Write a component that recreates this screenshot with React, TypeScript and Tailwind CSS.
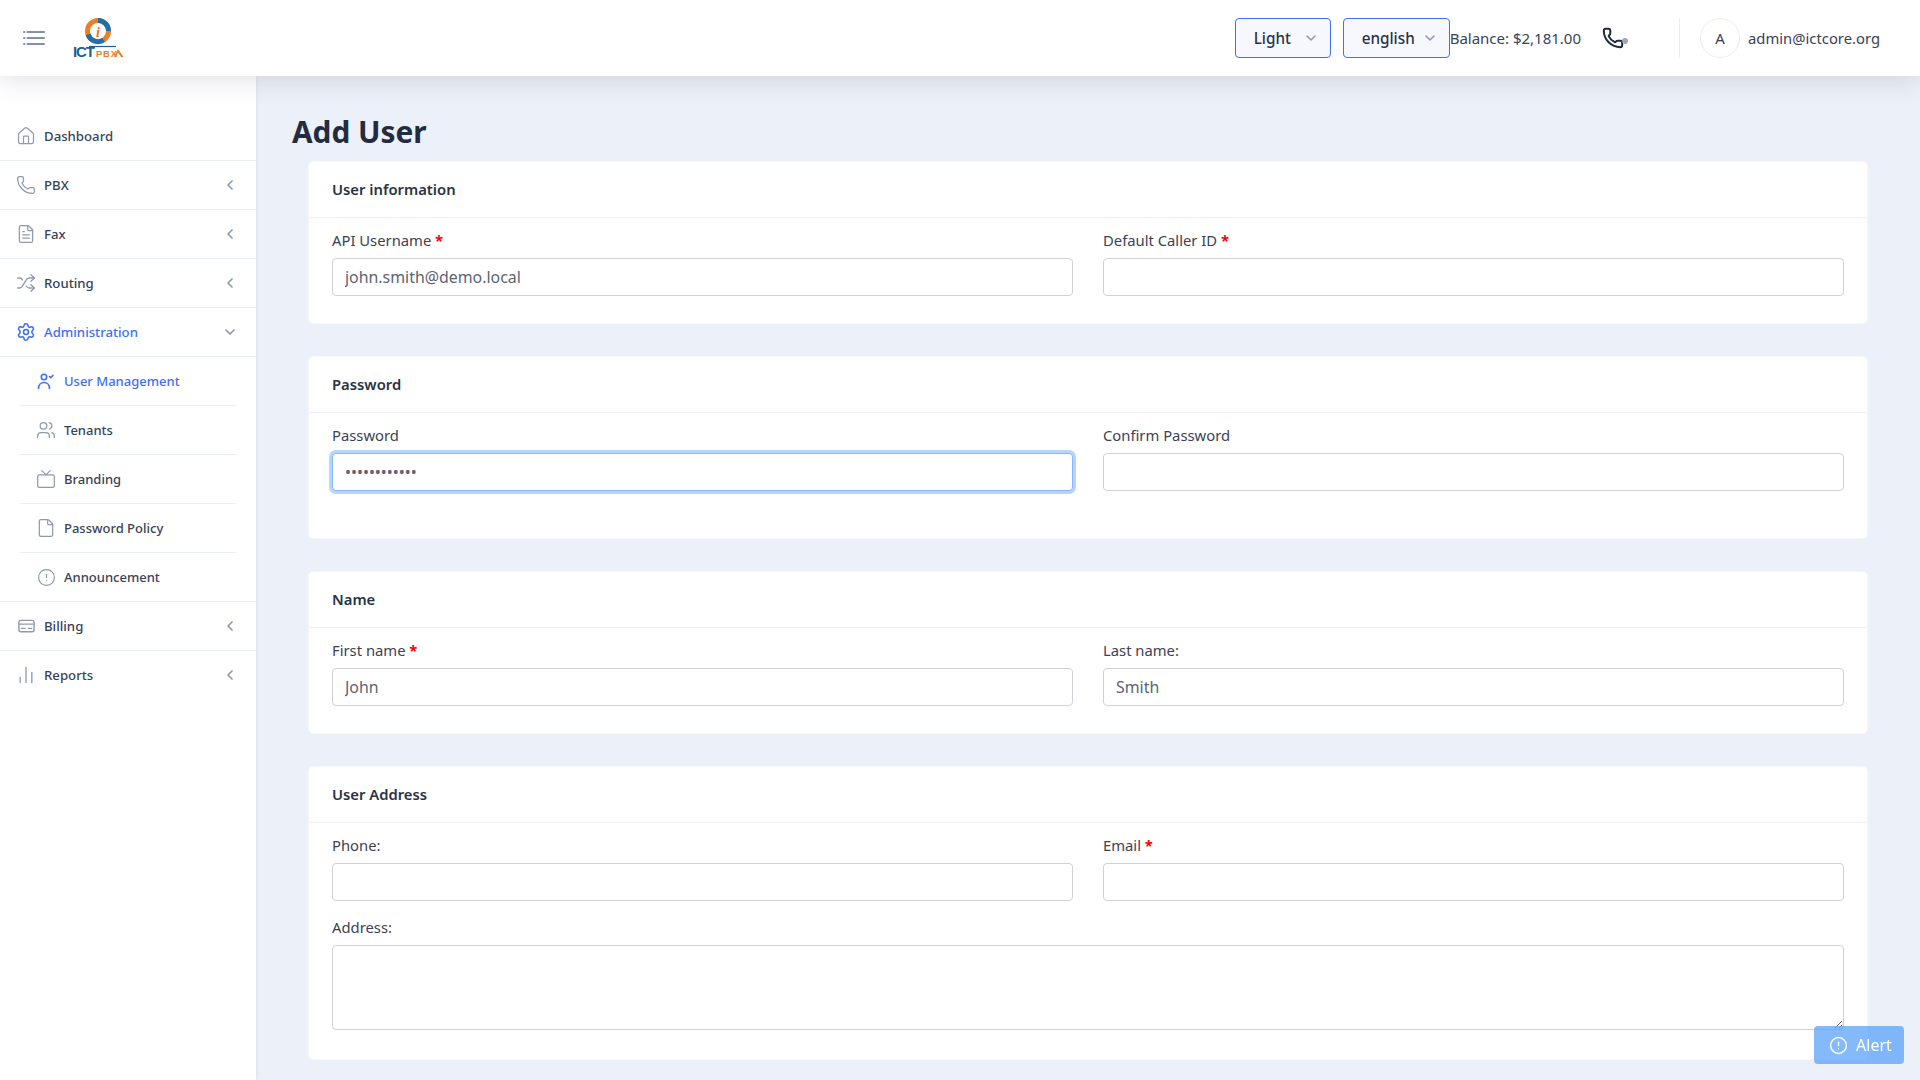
import React from "react";
import {
  House, Phone, FileText, Shuffle, Settings, Users, Tv, File, CircleAlert, ChevronLeft, ChevronDown, ChartNoAxesColumn,
} from "lucide-react";

function Logo() {
  return (
    <svg width="52" height="42" viewBox="0 0 52 42" className="shrink-0">
      <circle cx="26" cy="14" r="10.500" fill="none" stroke="#ef7d22" strokeWidth="5" />
      <path d="M26 3.500a10.500 10.500 0 0 1 10.500 10.500" fill="none" stroke="#1f6fa8" strokeWidth="5" />
      <path d="M16 17.500a10.500 10.500 0 0 0 15.500 5.500" fill="none" stroke="#1f6fa8" strokeWidth="5" />
      <circle cx="26" cy="14" r="7.500" fill="#fff" />
      <text x="26" y="19.500" textAnchor="middle" fontSize="14" fontWeight="700" fontStyle="italic" fill="#e8702a" fontFamily="'Liberation Serif', serif">i</text>
      <text x="1" y="40" fontSize="15" fontWeight="700" fill="#1e5f96" fontFamily="'Liberation Sans', sans-serif" textLength="22" lengthAdjust="spacing">ICT</text>
      <text x="24" y="40" fontSize="9.500" fontWeight="700" fill="#ef7d22" fontFamily="'Liberation Sans', sans-serif" textLength="21">PBX</text>
      <path d="M17 29.500h27" stroke="#1e5f96" strokeWidth="1.200" />
      <path d="M42 40l4-8 5.500 8h-2.500l-3-4.500-2 4.500z" fill="#ef7d22" />
    </svg>
  );
}

function UserCheckIcon({ className }: { className?: string }) {
  return (
    <svg viewBox="0 0 18 18" className={className} fill="none" stroke="currentColor" strokeWidth="1.600" strokeLinecap="round" strokeLinejoin="round">
      <circle cx="7" cy="5" r="2.700" />
      <path d="M1.500 16.500c0-3.800 2.500-6 5.500-6s5.500 2.200 5.500 6" />
      <path d="M12.500 4.500l1.200 1.200 2.300-2.400" />
    </svg>
  );
}

function BillingIcon({ className }: { className?: string }) {
  return (
    <svg viewBox="0 0 18 14" className={className} fill="none" stroke="currentColor" strokeWidth="1.500" strokeLinecap="round">
      <rect x="1" y="1" width="16" height="12" rx="2" />
      <path d="M1 5h16" />
      <path d="M3.500 9.500h4M11 9.500h3.500" />
    </svg>
  );
}

function NavRow({ icon, label, active, chevron, sub, last }: { icon: React.ReactNode; label: string; active?: boolean; chevron?: "left" | "down"; sub?: boolean; last?: boolean }) {
  return (
    <div className={`${sub ? "mx-5" : ""} ${last ? "" : "border-b border-[#e9edf6]"}`}>
      <div className={`h-12 flex items-center pl-[18px] pr-[18px] gap-[10px] ${sub ? "text-[13px]" : "text-[13.2px]"} font-medium ${active ? "text-[#3e6ff5]" : "text-[#3a4256]"}`}>
        <span className={`w-[16px] h-[16px] flex items-center justify-center shrink-0 [&>svg]:shrink-0 ${active ? "text-[#3e6ff5]" : "text-[#8f99b3]"}`}>{icon}</span>
        <span className="flex-1 pt-[1px]">{label}</span>
        {chevron === "left" && <ChevronLeft size={16} strokeWidth={2.600} className="text-[#8f99b3] shrink-0" />}
        {chevron === "down" && <ChevronDown size={16} strokeWidth={2.600} className="text-[#8f99b3] shrink-0" />}
      </div>
    </div>
  );
}

const inputClass = "block w-full h-[38px] rounded-[4px] border border-[#ced1da] bg-white px-3 text-[15.900px] text-[#5c6373] outline-none";

function Field({ label, required, value, type, focus }: { label: string; required?: boolean; value?: string; type?: string; focus?: boolean }) {
  return (
    <div className="flex-1 min-w-0">
      <div className="h-[25px] leading-[14px] text-[14.800px] text-[#3c4254]">
        {label}
        {required && <span className="text-[#ff0000] font-bold"> *</span>}
      </div>
      <input
        readOnly
        type={type || "text"}
        value={value || ""}
        className={focus ? "block w-full h-[38px] rounded-[4px] border border-[#86b7fe] ring-[3px] ring-[#b6d4fe] bg-white px-3 text-[15.900px] text-[#5c6373] outline-none" : inputClass}
      />
    </div>
  );
}

function Card({ title, children, pb }: { title: string; children: React.ReactNode; pb: string }) {
  return (
    <section className="bg-white rounded-[5px] border border-[#f6f8fc] mb-[32px]">
      <div className="h-[56px] flex items-center px-[23px] border-b border-[#eceff6] text-[14.800px] font-semibold text-[#2b3245]">{title}</div>
      <div className={`px-[23px] pt-[15px] ${pb}`}>{children}</div>
    </section>
  );
}

export default function App() {
  return (
    <div className="h-screen overflow-hidden flex flex-col bg-[#ecf0f8] font-['Noto_Sans','Open_Sans',sans-serif]">
      <header className="h-[76px] shrink-0 bg-white flex items-center pl-[23px] pr-[40px] relative z-20 shadow-[0_4px_24px_rgba(60,70,100,0.16)]">
        <svg width="22" height="14" viewBox="0 0 22 14" fill="none" stroke="#8290ad" strokeWidth="2" strokeLinecap="round" className="shrink-0">
          <path d="M1 1h0.500M4.500 1H21M1 7h0.500M4.500 7H21M1 13h0.500M4.500 13H21" />
        </svg>
        <div className="ml-[27px] mt-[-1px]"><Logo /></div>
        <div className="flex-1" />
        <div className="flex items-center h-10">
          <button className="h-10 w-[96px] rounded-[4px] border border-[#3e6ff5] bg-[#f7f8fd] flex items-center pl-[18px] pr-[11px] text-[15.300px] font-medium text-[#2b3245]">
            <span className="flex-1 text-left">Light</span>
            <ChevronDown size={16} strokeWidth={2.400} className="text-[#8f99b3] shrink-0" />
          </button>
          <button className="ml-3 h-10 w-[107px] rounded-[4px] border border-[#3e6ff5] bg-[#f7f8fd] flex items-center pl-[18px] pr-[11px] text-[15.300px] font-medium text-[#2b3245]">
            <span className="flex-1 text-left">english</span>
            <ChevronDown size={16} strokeWidth={2.400} className="text-[#8f99b3] shrink-0" />
          </button>
          <span className="text-[15px] text-[#3a4256] whitespace-nowrap">Balance: $2,181.00</span>
          <div className="ml-[21px] relative w-[26px] h-6 flex items-center">
            <Phone size={22} strokeWidth={2.200} className="text-[#1f2a44] shrink-0" />
            <span className="absolute right-0 top-[12px] w-[6px] h-[6px] rounded-full bg-[#9aa4bb]" />
          </div>
          <div className="ml-[51px] w-px h-10 bg-[#e9edf6]" />
          <div className="ml-5 w-10 h-10 rounded-full border border-[#e9edf6] flex items-center justify-center text-[15px] text-[#3a4256]">A</div>
          <span className="ml-2 text-[14.800px] text-[#3a4256] whitespace-nowrap">admin@ictcore.org</span>
        </div>
      </header>

      <div className="flex-1 min-h-0 flex">
        <aside className="w-[256px] shrink-0 bg-white pt-[36px] shadow-[1px_0_3px_rgba(60,70,100,0.08)] relative z-10">
          <NavRow icon={<House size={20} strokeWidth={1.500} />} label="Dashboard" />
          <NavRow icon={<Phone size={20} strokeWidth={1.500} />} label="PBX" chevron="left" />
          <NavRow icon={<FileText size={20} strokeWidth={1.500} />} label="Fax" chevron="left" />
          <NavRow icon={<Shuffle size={20} strokeWidth={1.600} />} label="Routing" chevron="left" />
          <NavRow icon={<Settings size={20} strokeWidth={1.900} />} label="Administration" chevron="down" active />
          <div className="border-b border-[#e9edf6]">
            <NavRow sub icon={<UserCheckIcon className="w-[18px] h-[18px]" />} label="User Management" active />
            <NavRow sub icon={<Users size={20} strokeWidth={1.500} />} label="Tenants" />
            <NavRow sub icon={<Tv size={20} strokeWidth={1.500} />} label="Branding" />
            <NavRow sub icon={<File size={20} strokeWidth={1.500} />} label="Password Policy" />
            <NavRow sub last icon={<CircleAlert size={19} strokeWidth={1.500} />} label="Announcement" />
          </div>
          <NavRow icon={<BillingIcon className="w-[17px] h-[14px]" />} label="Billing" chevron="left" />
          <NavRow last icon={<ChartNoAxesColumn size={20} strokeWidth={1.600} />} label="Reports" chevron="left" />
        </aside>

        <main className="flex-1 min-w-0 pl-[36px] pr-[52px] overflow-hidden">
          <h1 className="h-[85px] pt-[34px] leading-[44px] text-[29.800px] font-bold text-[#232b40]">Add User</h1>
          <div className="ml-4">
            <Card title="User information" pb="pb-[27px]">
              <div className="flex gap-[30px]">
                <Field label="API Username" required value="john.smith@demo.local" />
                <Field label="Default Caller ID" required />
              </div>
            </Card>
            <Card title="Password" pb="pb-[47px]">
              <div className="flex gap-[30px]">
                <Field label="Password" type="password" value="johnsmith123" focus />
                <Field label="Confirm Password" />
              </div>
            </Card>
            <Card title="Name" pb="pb-[27px]">
              <div className="flex gap-[30px]">
                <Field label="First name" required value="John" />
                <Field label="Last name:" value="Smith" />
              </div>
            </Card>
            <Card title="User Address" pb="pb-[29px]">
              <div className="flex gap-[30px]">
                <Field label="Phone:" />
                <Field label="Email" required />
              </div>
              <div className="mt-[12px] h-[32px] leading-[28px] text-[14.800px] text-[#3c4254]">Address:</div>
              <textarea readOnly className="block w-full h-[85px] rounded-[4px] border border-[#ced1da] bg-white px-3 py-2 text-[16px] outline-none" />
            </Card>
          </div>
        </main>
      </div>

      <button className="fixed right-4 bottom-4 w-[90px] h-[38px] rounded-[4px] bg-[#5ba3fb]/75 flex items-center justify-center gap-[8px] pl-[3px] text-[16px] text-white">
        <CircleAlert size={19} strokeWidth={1.800} className="shrink-0" />
        Alert
      </button>
    </div>
  );
}
